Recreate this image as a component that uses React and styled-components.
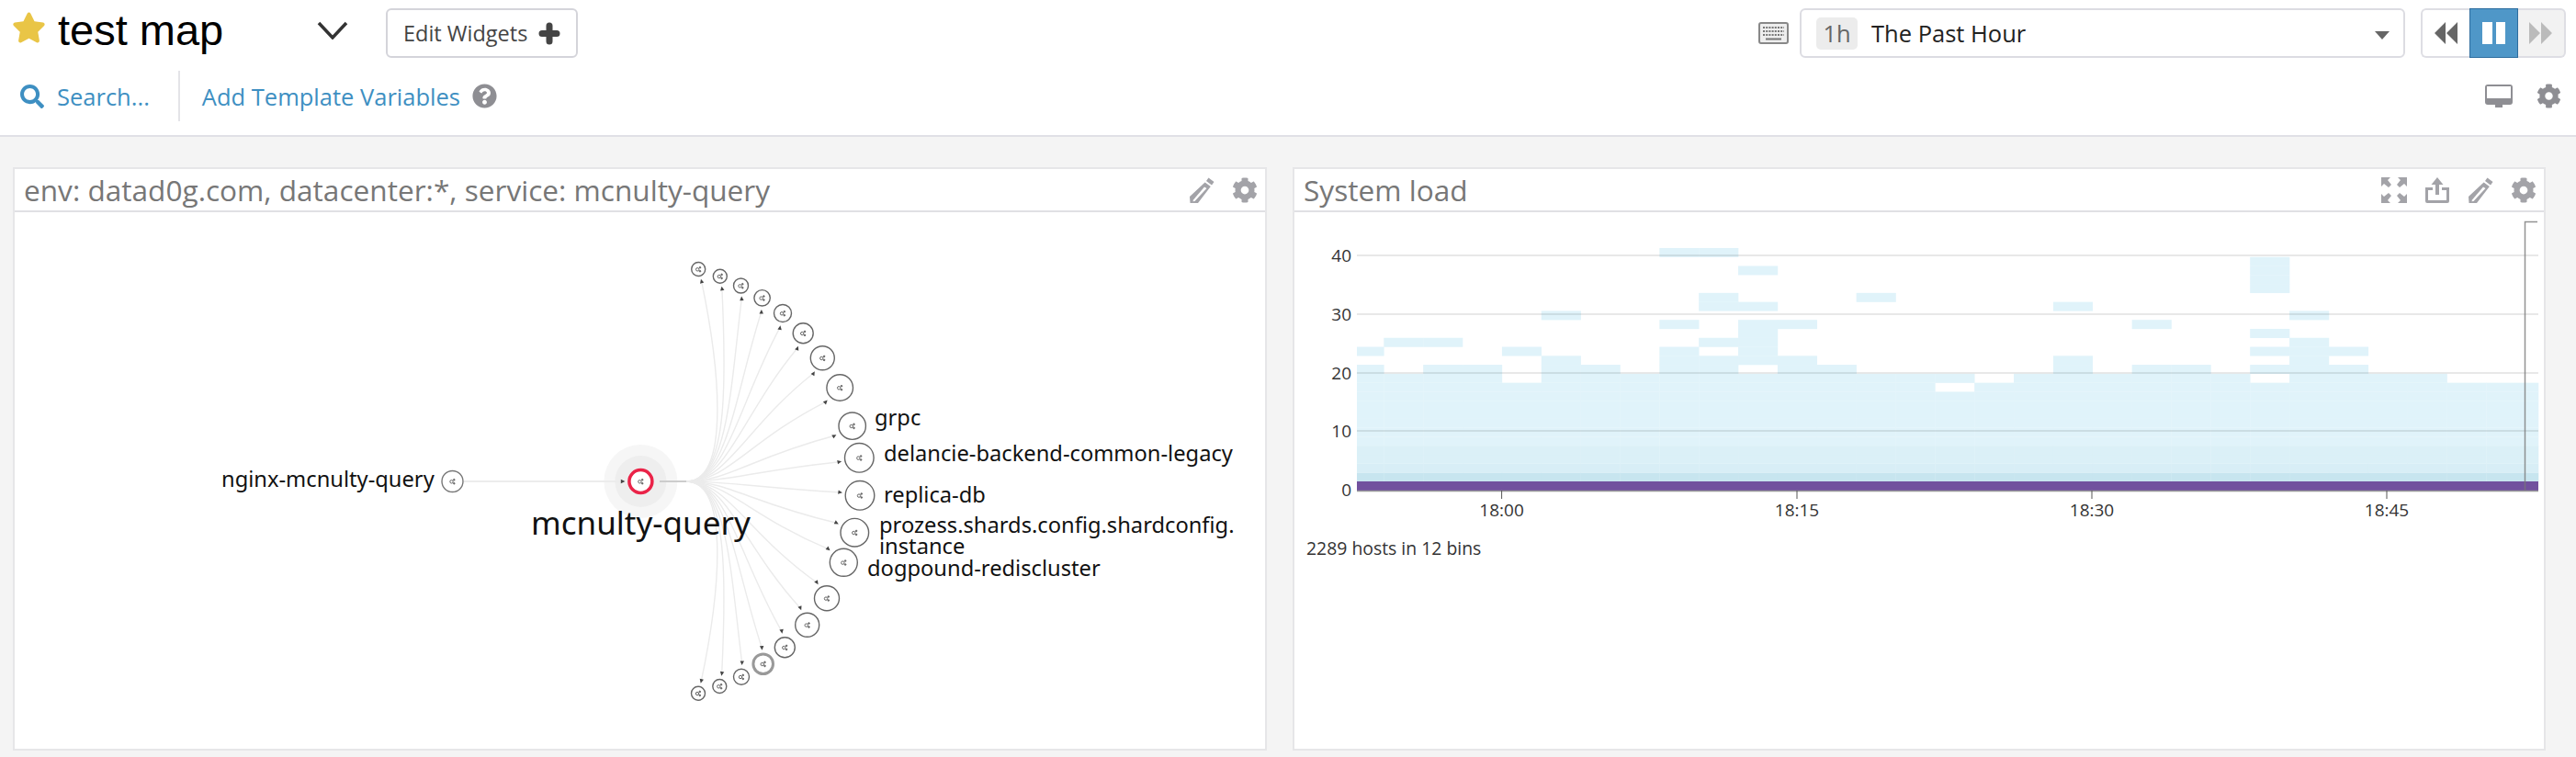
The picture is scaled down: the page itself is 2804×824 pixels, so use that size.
import React from 'react';
import styled, { createGlobalStyle } from 'styled-components';
import { FaStar, FaSearch, FaQuestionCircle, FaCog } from 'react-icons/fa';

const GlobalStyle = createGlobalStyle`
  html, body {
    margin: 0;
    height: 824px;
    overflow: hidden;
    background: #f4f4f4;
    font-family: "Open Sans", "Noto Sans", sans-serif;
  }
`;

const Header = styled.header`
  height: 138px;
  padding-top: 9px;
  background: #fff;
  border-bottom: 2px solid #e0e0e6;
`;

const TopRow = styled.div`
  display: flex;
  align-items: center;
  height: 54px;
  padding: 0 11px 0 13px;
`;

const SubRow = styled.div`
  display: flex;
  align-items: center;
  height: 55px;
  margin-top: 14px;
  padding: 0 15px 0 21px;
`;

const Star = styled(FaStar)`
  width: 37px;
  height: 34px;
  margin-bottom: 12px;
  color: #e9c546;
`;

const Title = styled.h1`
  width: 282px;
  margin: 0 0 8px 13px;
  font: 400 47px "Liberation Sans", Arial, sans-serif;
  color: #000;
`;

const Chevron = styled.svg`
  width: 34px;
  height: 20px;
  margin-bottom: 7px;
  fill: none;
  stroke: #333;
  stroke-width: 3.5;
`;

const EditButton = styled.button`
  display: flex;
  align-items: center;
  gap: 12px;
  height: 54px;
  margin-left: 41px;
  padding: 0 17px;
  background: #fff;
  border: 2px solid #d4d4da;
  border-radius: 6px;
  font: 400 23.5px "Open Sans", sans-serif;
  color: #444;
`;

const PlusIcon = styled.svg`
  width: 24px;
  height: 25px;
  fill: none;
  stroke: #444;
  stroke-width: 7;
  stroke-linecap: round;
`;

const KeyboardIcon = styled.svg`
  width: 33px;
  height: 24px;
  margin-left: auto;
  margin-right: 12px;
`;

const TimeSelect = styled.div`
  display: flex;
  align-items: center;
  box-sizing: border-box;
  width: 659px;
  height: 54px;
  padding: 0 15px 0 16px;
  background: #fff;
  border: 2px solid #dcdce2;
  border-radius: 6px;
`;

const TimeChip = styled.span`
  display: flex;
  align-items: center;
  justify-content: center;
  width: 45px;
  height: 35px;
  background: #ececec;
  border-radius: 5px;
  font-size: 25.5px;
  color: #666;
`;

const TimeLabel = styled.span`
  margin-left: 15px;
  font-size: 25.5px;
  color: #222;
`;

const Caret = styled.span`
  margin: 4px 0 0 auto;
  border-top: 9px solid #666;
  border-left: 8.5px solid transparent;
  border-right: 8.5px solid transparent;
`;

const PlayGroup = styled.div`
  display: flex;
  height: 54px;
  margin-left: 17px;
  border-radius: 6px;
`;

const PlayButton = styled.div`
  display: flex;
  align-items: center;
  justify-content: center;
  box-sizing: border-box;
  width: ${({ $active }) => ($active ? '53px' : '52.5px')};
  background: ${({ $active, $muted }) => ($active ? '#4f97c8' : $muted ? '#f2f2f2' : '#fff')};
  border: ${({ $active }) => ($active ? '1px solid #2d6d9f' : '2px solid #dedee4')};
  border-width: ${({ $active, $side }) => ($active ? '1px' : $side === 'left' ? '2px 0 2px 2px' : '2px 2px 2px 0')};
  border-radius: ${({ $side }) => ($side === 'left' ? '6px 0 0 6px' : $side === 'right' ? '0 6px 6px 0' : '0')};
`;

const PlayIcon = styled.svg`
  width: 25px;
  height: 24px;
  fill: ${({ $tone }) => $tone};
`;

const SearchIcon = styled(FaSearch)`
  width: 28px;
  height: 26px;
  color: #3e8fc2;
`;

const LinkText = styled.span`
  font-size: 25.5px;
  color: #3e8fc2;
`;

const SearchText = styled(LinkText)`
  margin-left: 13px;
`;

const Divider = styled.div`
  width: 2px;
  height: 55px;
  margin: 0 24px 0 31px;
  background: #e4e4e8;
`;

const HelpIcon = styled(FaQuestionCircle)`
  width: 27px;
  height: 27px;
  margin-left: 13px;
  color: #8e8e93;
`;

const MonitorIcon = styled.svg`
  width: 30px;
  height: 26px;
  margin-left: auto;
  margin-right: 25px;
`;

const HeaderGear = styled(FaCog)`
  width: 29px;
  height: 27px;
  color: #8e8e93;
`;

const Board = styled.main`
  display: grid;
  grid-template-columns: 1365px 1364px;
  gap: 28px;
  height: 635px;
  padding: 33px 33px 0 14px;
`;

const Panel = styled.section`
  display: flex;
  flex-direction: column;
  height: 635px;
  background: #fff;
  border: 2px solid #e6e6e8;
  box-sizing: border-box;
`;

const PanelHead = styled.div`
  display: flex;
  align-items: center;
  flex: none;
  height: 45px;
  padding: 0 8px 0 10px;
  border-bottom: 2px solid #e0e0e4;
`;

const PanelTitle = styled.h2`
  margin: 0 auto 0 0;
  font-size: 31.6px;
  font-weight: 400;
  color: #777;
`;

const PanelTools = styled.div`
  display: flex;
  align-items: center;
  gap: 19px;
`;

const ToolIcon = styled.svg`
  width: 28px;
  height: 28px;
  fill: #a3a3a8;
`;

const ToolGear = styled(FaCog)`
  width: 28px;
  height: 28px;
  color: #a3a3a8;
`;

const Drawing = styled.svg`
  display: block;
  flex: none;
  width: ${({ $w }) => $w}px;
  height: ${({ $h }) => $h}px;
`;

const GraphLabel = styled.text`
  font-family: "Noto Sans", "Open Sans", sans-serif;
  font-size: ${({ $big }) => ($big ? '35px' : '23.7px')};
  fill: #111;
`;

const AxisLabel = styled.text`
  font-size: 19px;
  fill: #333;
`;

const Caption = styled.div`
  margin: 7px 0 0 13px;
  font-size: 19.4px;
  color: #333;
`;

const nodes = [
  [760.2, 293, 7.5, 763.6, 306],
  [783.8, 300.7, 7.5, 785.9, 314],
  [806.5, 311, 8, 807.3, 325],
  [829.6, 324.3, 8.7, 828.8, 339.3],
  [852, 341, 9.5, 849, 356.7],
  [874.2, 362.7, 11, 868, 379],
  [895.3, 389.7, 13, 885.6, 406.3],
  [914.2, 422, 14.3, 899, 437.3],
  [927.7, 463.7, 14.7, 908.3, 474.3],
  [935.3, 498.3, 15.8, 913.8, 502.7],
  [936, 539.3, 15.8, 914.6, 536],
  [930.3, 579.7, 15.3, 910.7, 569.3],
  [918.3, 612.3, 15, 901.7, 597.7],
  [900, 651.3, 13.5, 889.3, 634.3],
  [878.7, 680.3, 13, 871.3, 662],
  [854.3, 704.7, 11, 851, 687.3],
  [830.7, 722.7, 10.8, 829.3, 705.3, true],
  [807, 736.7, 8.5, 807.7, 721.7],
  [783.3, 747, 7.5, 785.7, 733.3],
  [760, 754.7, 7.5, 763.3, 741.3],
];

const labels = [
  ['nginx-mcnulty-query', 241, 530],
  ['grpc', 952, 463],
  ['delancie-backend-common-legacy', 962, 502],
  ['replica-db', 962, 547],
  ['prozess.shards.config.shardconfig.', 957, 580],
  ['instance', 957, 603],
  ['dogpound-rediscluster', 944, 627],
];

const HUB = [747, 524];

const curve = ([, , , ax, ay]) => {
  const c1x = HUB[0] + 45;
  const c2x = c1x + (ax - c1x) * 0.2;
  const c2y = (ay + HUB[1]) / 2;
  return `M${HUB[0]} ${HUB[1]}C${c1x} ${HUB[1]} ${c2x} ${c2y} ${ax} ${ay}`;
};

const NodeGlyph = ({ x, y }) => (
  <g transform={`translate(${x} ${y})`} fill="none" stroke="#666" strokeWidth="1">
    <circle cx="-1" cy="0.3" r="1.7" />
    <circle cx="1.8" cy="-1.8" r="0.8" fill="#666" />
    <circle cx="1.8" cy="2.2" r="0.8" fill="#666" />
  </g>
);

const Arrow = ({ x, y, angle }) => (
  <polygon points="-2.2,-2.2 2.4,0 -2.2,2.2" fill="#444" transform={`translate(${x} ${y}) rotate(${angle})`} />
);

const ServiceGraph = () => (
  <Drawing $w={1361} $h={584} viewBox="16 231 1361 584">
    <circle cx="697.4" cy="524" r="40" fill="#f6f6f6" />
    <circle cx="697.4" cy="524" r="28" fill="#eee" />
    <line x1="505" y1="524" x2="676" y2="524" stroke="#ececec" strokeWidth="2" />
    <line x1="718" y1="524" x2="748" y2="524" stroke="#ccc" strokeWidth="2" />
    {nodes.map((n) => (
      <path key={n[0]} d={curve(n)} fill="none" stroke="#ebebeb" strokeWidth="1.4" />
    ))}
    {nodes.map(([x, y, r, ax, ay, heavy]) => (
      <g key={x}>
        <circle cx={x} cy={y} r={r} fill="#fff" stroke={heavy ? '#999' : '#666'} strokeWidth={heavy ? 3 : 1.4} />
        <NodeGlyph x={x} y={y} />
        <Arrow x={ax} y={ay} angle={(Math.atan2(y - ay, x - ax) * 180) / Math.PI} />
      </g>
    ))}
    <circle cx="492.5" cy="524" r="11.5" fill="#fff" stroke="#777" strokeWidth="1.4" />
    <NodeGlyph x={492.5} y={524} />
    <Arrow x={678} y={524} angle={0} />
    <circle cx="697.4" cy="524" r="12.5" fill="#fff" stroke="#ea2348" strokeWidth="3.5" />
    <NodeGlyph x={697.4} y={524} />
    {labels.map(([text, x, y]) => (
      <GraphLabel key={text} x={x} y={y}>{text}</GraphLabel>
    ))}
    <GraphLabel $big x="697.4" y="582" textAnchor="middle">mcnulty-query</GraphLabel>
  </Drawing>
);

const BASE = '#e0f3fa';
const ROW = 9.78;
const COL = 42.86;
const LEFT = 1477;
const RIGHT = 2763;
const ZERO = 534;

// upper bins per column, counted in rows above the zero line
const extraBins = {
  0: [13, 15],
  1: [16],
  2: [13, 16],
  3: [13],
  4: [15],
  5: [13, 14, 19],
  6: [13],
  8: [13, 14, 15, 18, 26],
  9: [13, 14, 16, 20, 21, 26],
  10: [14, 15, 16, 17, 18, 20, 24],
  11: [13, 14, 18],
  12: [13],
  13: [21],
  18: [13, 14, 20],
  20: [13, 18],
  21: [13],
  23: [13, 15, 17, 22, 23, 24, 25],
  24: [13, 14, 15, 16, 19],
  25: [13, 15],
};

const notches = { 4: [12], 15: [11], 16: [12], 23: [12], 28: [12], 29: [12], 30: [12] };

const colEdges = (c) => {
  const from = c === 0 ? LEFT : 1506.3 + COL * (c - 1);
  const to = Math.min(1506.3 + COL * c, RIGHT);
  return [from, to - from];
};

const bandColor = (r) => {
  if (r === 1) return '#c7e5ef';
  if (r === 2) return '#d8eef6';
  if (r === 3 || r === 4) return '#dbf0f7';
  return BASE;
};

const bins = [];
for (let c = 0; c <= 30; c += 1) {
  const [x, w] = colEdges(c);
  for (let r = 1; r <= 12; r += 1) {
    if (!(notches[c] || []).includes(r)) bins.push({ x, w, r, fill: bandColor(r) });
  }
  (extraBins[c] || []).forEach((r) => bins.push({ x, w, r, fill: BASE }));
}

const yTicks = [
  [40, 278],
  [30, 342],
  [20, 406],
  [10, 469],
];

const xTicks = [
  ['18:00', 1634.6],
  ['18:15', 1956],
  ['18:30', 2277],
  ['18:45', 2598],
];

const LoadChart = () => (
  <Drawing $w={1360} $h={345} viewBox="1409 231 1360 345">
    {bins.map(({ x, w, r, fill }) => (
      <rect key={`${x}-${r}`} x={x} y={ZERO - (r + 1) * ROW} width={w + 0.3} height={ROW + 0.2} fill={fill} />
    ))}
    <rect x={LEFT} y={524} width={RIGHT - LEFT} height={10} fill="#71519e" />
    {yTicks.map(([v, y]) => (
      <g key={v}>
        <line x1={LEFT} y1={y} x2={RIGHT} y2={y} stroke="#000" strokeOpacity="0.09" strokeWidth="2" />
        <AxisLabel x="1471" y={y + 7} textAnchor="end">{v}</AxisLabel>
      </g>
    ))}
    <AxisLabel x="1471" y="540" textAnchor="end">0</AxisLabel>
    <line x1={LEFT} y1="534.5" x2={RIGHT} y2="534.5" stroke="#999" strokeWidth="1.5" />
    {xTicks.map(([t, x]) => (
      <g key={t}>
        <line x1={x} y1="534" x2={x} y2="543" stroke="#555" />
        <AxisLabel x={x} y="562" textAnchor="middle">{t}</AxisLabel>
      </g>
    ))}
    <path d="M2762 241.5H2748.5V534" fill="none" stroke="#777" strokeOpacity="0.8" strokeWidth="1.5" />
  </Drawing>
);

const Pencil = () => (
  <ToolIcon viewBox="0 0 28 28">
    <path d="M21.5 0.5l6 4.5-2.5 3.5-6-4.5zM17.6 5.5l6.2 4.6L10 28l-8.5 0L1 21z" />
    <path d="M17 10.5L5 24.5l-.5 1.8 2-.2L19.5 12z" fill="#fff" />
  </ToolIcon>
);

const Expand = () => (
  <ToolIcon viewBox="0 0 28 28">
    <path d="M0 0h10L7 3l4 5-3 3-5-4-3 3zM28 0v10l-3-3-5 4-3-3 4-5-3-3zM0 28V18l3 3 5-4 3 3-4 5 3 3zM28 28H18l3-3-4-5 3-3 5 4 3-3z" />
  </ToolIcon>
);

const Share = () => (
  <ToolIcon viewBox="0 0 28 28">
    <path d="M14 0l6.5 8H16v11h-4V8H7.5zM1 11h8v3H4v11h20V14h-5v-3h8v15a2 2 0 0 1-2 2H3a2 2 0 0 1-2-2z" />
  </ToolIcon>
);

export default function App() {
  return (
    <>
      <GlobalStyle />
      <Header>
        <TopRow>
          <Star />
          <Title>test map</Title>
          <Chevron viewBox="0 0 34 20">
            <path d="M2 2l15 16L32 2" />
          </Chevron>
          <EditButton>
            Edit Widgets
            <PlusIcon viewBox="0 0 24 25">
              <path d="M12 4v17M4 12.5h16" />
            </PlusIcon>
          </EditButton>
          <KeyboardIcon viewBox="0 0 33 24">
            <rect x="1" y="1" width="31" height="22" rx="2" fill="#eee" stroke="#888" strokeWidth="2" />
            <path d="M5 6h23M5 10h23M5 14h23" stroke="#777" strokeWidth="2" strokeDasharray="2 1.2" />
            <path d="M8 18.5h17" stroke="#777" strokeWidth="2" />
          </KeyboardIcon>
          <TimeSelect>
            <TimeChip>1h</TimeChip>
            <TimeLabel>The Past Hour</TimeLabel>
            <Caret />
          </TimeSelect>
          <PlayGroup>
            <PlayButton $side="left">
              <PlayIcon viewBox="0 0 25 24" $tone="#666"><path d="M12 0v24L0 12zM25 0v24L13 12z" /></PlayIcon>
            </PlayButton>
            <PlayButton $active>
              <PlayIcon viewBox="0 0 25 24" $tone="#fff"><path d="M0 0h11v24H0zM15 0h10v24H15z" /></PlayIcon>
            </PlayButton>
            <PlayButton $side="right" $muted>
              <PlayIcon viewBox="0 0 25 24" $tone="#bbb"><path d="M0 0v24l12-12zM13 0v24l12-12z" /></PlayIcon>
            </PlayButton>
          </PlayGroup>
        </TopRow>
        <SubRow>
          <SearchIcon />
          <SearchText>Search...</SearchText>
          <Divider />
          <LinkText>Add Template Variables</LinkText>
          <HelpIcon />
          <MonitorIcon viewBox="0 0 30 26">
            <path d="M3 0h24a3 3 0 0 1 3 3v16a3 3 0 0 1-3 3h-8v3h-8v-3H3a3 3 0 0 1-3-3V3a3 3 0 0 1 3-3z" fill="#8e8e93" />
            <rect x="2" y="2" width="26" height="13" fill="#fff" />
          </MonitorIcon>
          <HeaderGear />
        </SubRow>
      </Header>
      <Board>
        <Panel>
          <PanelHead>
            <PanelTitle>env: datad0g.com, datacenter:*, service: mcnulty-query</PanelTitle>
            <PanelTools>
              <Pencil />
              <ToolGear />
            </PanelTools>
          </PanelHead>
          <ServiceGraph />
        </Panel>
        <Panel>
          <PanelHead>
            <PanelTitle>System load</PanelTitle>
            <PanelTools>
              <Expand />
              <Share />
              <Pencil />
              <ToolGear />
            </PanelTools>
          </PanelHead>
          <LoadChart />
          <Caption>2289 hosts in 12 bins</Caption>
        </Panel>
      </Board>
    </>
  );
}
